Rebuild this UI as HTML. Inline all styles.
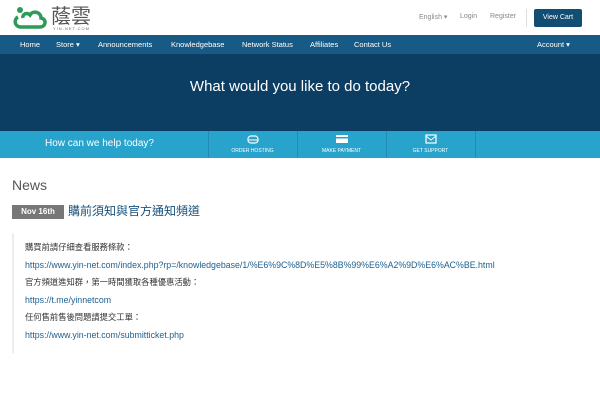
<!DOCTYPE html><html><head><meta charset="utf-8"><style>
*{margin:0;padding:0;box-sizing:border-box}
body{width:600px;height:400px;overflow:hidden;background:#fff;font-family:"Liberation Sans","Noto Sans CJK TC",sans-serif;position:relative}
.a{position:absolute;white-space:nowrap}
</style></head><body>
<svg class="a" style="left:12px;top:5px" width="36" height="26" viewBox="0 0 36 26"><path d="M6 12c-4 2-4 9 2 10h20c6 0 7-8 1-9 0-6-8-8-11-3-3-3-8-1-7 3" fill="none" stroke="#2e9a58" stroke-width="3.5"/><circle cx="8" cy="5" r="3" fill="#2e9a58"/></svg>
<div class="a" style="left:51px;top:3px;font-size:20px;color:#555;font-family:'Noto Sans CJK TC',sans-serif;line-height:24px">蔭雲</div>
<div class="a" style="left:53px;top:26px;font-size:4px;color:#666;letter-spacing:1px">YIN-NET.COM</div>
<div class="a" style="left:419px;top:13px;font-size:7px;color:#888">English ▾</div>
<div class="a" style="left:460px;top:13px;font-size:7px;color:#888">Login</div>
<div class="a" style="left:490px;top:13px;font-size:7px;color:#888">Register</div>
<div class="a" style="left:526px;top:9px;width:1px;height:18px;background:#ddd"></div>
<div class="a" style="left:534px;top:9px;width:48px;height:18px;background:#124d73;border-radius:2px;color:#fff;font-size:7px;text-align:center;line-height:18px">View Cart</div>
<div class="a" style="left:0;top:35px;width:600px;height:19px;background:#175a85"></div>
<div class="a" style="top:40px;left:0;font-size:7.5px;color:#fff;line-height:9px">
<span class="a" style="left:20px">Home</span><span class="a" style="left:56px">Store ▾</span><span class="a" style="left:98px">Announcements</span><span class="a" style="left:171px">Knowledgebase</span><span class="a" style="left:242px">Network Status</span><span class="a" style="left:310px">Affiliates</span><span class="a" style="left:354px">Contact Us</span><span class="a" style="left:537px">Account ▾</span></div>
<div class="a" style="left:0;top:54px;width:600px;height:77px;background:#0c3d62"></div>
<div class="a" style="left:0;top:78px;width:600px;text-align:center;font-size:15px;color:#fff">What would you like to do today?</div>
<div class="a" style="left:0;top:131px;width:600px;height:27px;background:#27a3cc"></div>
<div class="a" style="left:45px;top:138px;font-size:10px;color:#fff">How can we help today?</div>
<div class="a" style="left:208px;top:131px;width:1px;height:27px;background:#1f8db3"></div>
<div class="a" style="left:297px;top:131px;width:1px;height:27px;background:#1f8db3"></div>
<div class="a" style="left:386px;top:131px;width:1px;height:27px;background:#1f8db3"></div>
<div class="a" style="left:475px;top:131px;width:1px;height:27px;background:#1f8db3"></div>
<svg class="a" style="left:247px;top:134px" width="12" height="10"><rect x="1" y="2" width="10" height="7" rx="3" fill="none" stroke="#fff" stroke-width="1.2"/><line x1="1" y1="6" x2="11" y2="6" stroke="#fff"/></svg>
<svg class="a" style="left:336px;top:134px" width="12" height="10"><rect x="0" y="1" width="12" height="8" fill="#fff"/><rect x="0" y="3" width="12" height="1.5" fill="#27a3cc"/></svg>
<svg class="a" style="left:425px;top:134px" width="12" height="10"><rect x="1" y="1" width="10" height="8" fill="none" stroke="#fff" stroke-width="1.2"/><path d="M1 2l5 4 5-4" fill="none" stroke="#fff"/></svg>
<div class="a" style="left:208px;top:148px;width:89px;text-align:center;font-size:5px;color:#fff">ORDER HOSTING</div>
<div class="a" style="left:297px;top:148px;width:89px;text-align:center;font-size:5px;color:#fff">MAKE PAYMENT</div>
<div class="a" style="left:386px;top:148px;width:89px;text-align:center;font-size:5px;color:#fff">GET SUPPORT</div>
<div class="a" style="left:12px;top:177px;font-size:14px;color:#555">News</div>
<div class="a" style="left:12px;top:205px;width:52px;height:14px;background:#777;color:#fff;font-size:8px;font-weight:bold;text-align:center;line-height:14px">Nov 16th</div>
<div class="a" style="left:68px;top:202px;font-size:12px;color:#15507a">購前須知與官方通知頻道</div>
<div class="a" style="left:12px;top:233px;width:2px;height:120px;background:#eee"></div>
<div style="position:absolute;left:25px;top:239px;font-size:8.8px;line-height:17.6px;color:#333;white-space:nowrap">
<div style="font-size:8.3px">購買前請仔細查看服務條款：</div>
<div style="color:#1e6090">https://www.yin-net.com/index.php?rp=/knowledgebase/1/%E6%9C%8D%E5%8B%99%E6%A2%9D%E6%AC%BE.html</div>
<div style="font-size:8.3px">官方頻道進知群，第一時間獲取各種優惠活動：</div>
<div style="color:#1e6090">https://t.me/yinnetcom</div>
<div style="font-size:8.3px">任何售前售後問題請提交工單：</div>
<div style="color:#1e6090">https://www.yin-net.com/submitticket.php</div>
</div>
</body></html>
